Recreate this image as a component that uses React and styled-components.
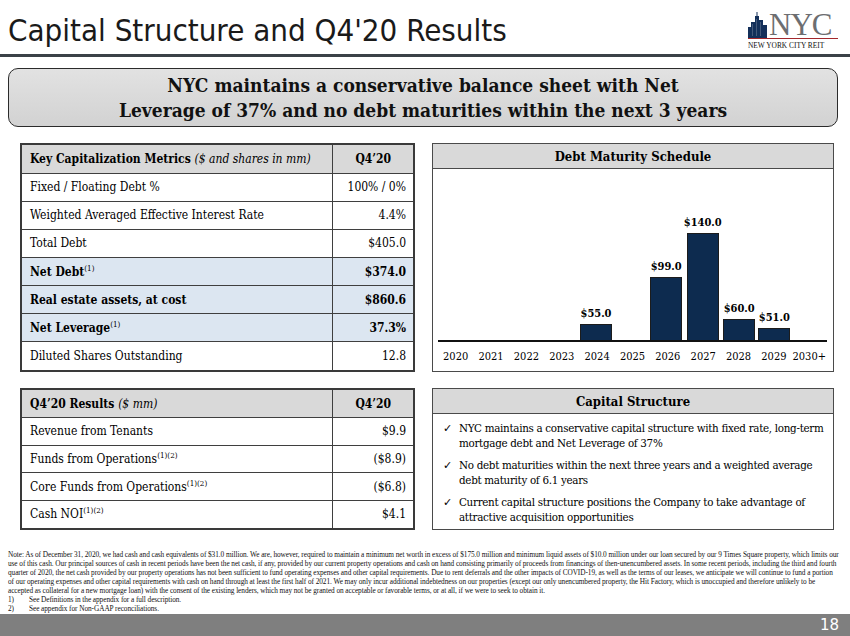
import React from 'react';
import styled, { createGlobalStyle } from 'styled-components';

const GlobalStyle = createGlobalStyle`
  html, body { margin: 0; padding: 0; background: #fff; }
  body { width: 850px; height: 636px; overflow: hidden; }
  * { box-sizing: border-box; }
`;

const serif = `"DejaVu Serif Condensed", "DejaVu Serif", serif`;

const Page = styled.div`
  width: 850px;
  height: 636px;
  display: flex;
  flex-direction: column;
  font-family: ${serif};
  color: #000;
`;

const Header = styled.header`
  height: 57px;
  flex: none;
  display: flex;
  justify-content: space-between;
  align-items: flex-start;
  border-bottom: 3px solid #3b4147;
  padding: 0 12px 0 8px;
`;

const Title = styled.h1`
  margin: 10px 0 0;
  font-family: "Liberation Sans Narrow", "DejaVu Sans Condensed", sans-serif;
  font-weight: 400;
  font-size: 31px;
  line-height: 40px;
  color: #1a1a1a;
`;

const Logo = styled.div`
  margin-top: 11px;
  display: flex;
  flex-direction: column;
  align-items: stretch;
  width: 90px;
`;

const LogoTop = styled.div`
  display: flex;
  align-items: flex-end;
  height: 28px;
  border-bottom: 1px solid #a3282c;
`;

const LogoWord = styled.span`
  font-family: "Liberation Serif", serif;
  font-size: 31px;
  line-height: 31px;
  margin-bottom: -2px;
  color: #6d6e71;
  letter-spacing: -1px;
  margin-left: 2px;
`;

const LogoSub = styled.span`
  margin-top: 3px;
  font-family: "Liberation Serif", serif;
  font-size: 7.4px;
  line-height: 8px;
  white-space: nowrap;
  color: #111;
`;

const Callout = styled.div`
  flex: none;
  margin: 11px 12px 0 8px;
  height: 59px;
  border: 1px solid #2b2b2b;
  border-radius: 10px;
  background: linear-gradient(#e2e2e2, #d2d2d2);
  display: flex;
  flex-direction: column;
  align-items: center;
  justify-content: center;
  font-weight: 700;
  font-size: 19px;
  line-height: 25px;
  color: #111;
`;

const Grid = styled.main`
  flex: none;
  margin-top: 16px;
  padding: 0 16px 0 20px;
  display: grid;
  grid-template-columns: 395px 402px;
  grid-template-rows: 229px 142px;
  column-gap: 17px;
  row-gap: 16px;
`;

const Table = styled.table`
  width: 100%;
  height: 100%;
  border-collapse: collapse;
  border: 2px solid #3a3a3a;
  font-size: 12px;
  table-layout: fixed;
`;

const Row = styled.tr`
  background: ${p => (p.$head ? '#d9d9d9' : p.$hl ? '#dce6f1' : '#fff')};
  font-weight: ${p => (p.$head || p.$hl ? 700 : 400)};
`;

const Cell = styled.td`
  border: 1.5px solid #3f3f3f;
  padding: 0 7px 0 8px;
  white-space: nowrap;
  text-align: ${p => (p.$num ? 'right' : 'left')};
  ${p => p.$center && 'text-align: center;'}
  width: ${p => (p.$num ? '82px' : 'auto')};
`;

const Ital = styled.i`
  font-weight: 400;
`;

const Sup = styled.sup`
  font-size: 8px;
  line-height: 0;
  vertical-align: 5px;
  font-weight: 400;
`;

const Panel = styled.section`
  border: 1.5px solid #4a4a4a;
  display: flex;
  flex-direction: column;
`;

const PanelHead = styled.div`
  height: 25px;
  flex: none;
  background: #d9d9d9;
  border-bottom: 1.5px solid #4a4a4a;
  display: flex;
  align-items: center;
  justify-content: center;
  font-weight: 700;
  font-size: 13px;
`;

const ChartBody = styled.div`
  flex: 1;
  display: flex;
  flex-direction: column;
  padding: 0 6px 0 5px;
`;

const Plot = styled.div`
  height: 173px;
  display: flex;
  align-items: flex-end;
  border-bottom: 2px solid #111;
`;

const Col = styled.div`
  flex: 1;
  display: flex;
  flex-direction: column;
  align-items: center;
  justify-content: flex-end;
`;

const BarLabel = styled.span`
  font-weight: 700;
  font-size: 11px;
  line-height: 12px;
  margin-bottom: 4px;
`;

const Bar = styled.div`
  width: 32px;
  background: #0d2b4f;
  border: 1px solid #1c1c1c;
  border-bottom: none;
`;

const Years = styled.div`
  display: flex;
  margin-top: 8px;
`;

const Year = styled.span`
  flex: 1;
  text-align: center;
  font-size: 11px;
`;

const List = styled.ul`
  list-style: none;
  margin: 0;
  padding: 7px 6px 0 10px;
  display: flex;
  flex-direction: column;
  gap: 7px;
`;

const Item = styled.li`
  display: flex;
  gap: 7px;
  font-size: 11.5px;
  letter-spacing: -0.3px;
  line-height: 15px;
`;

const Check = styled.span`
  flex: none;
  width: 9px;
  font-family: "DejaVu Sans", sans-serif;
  font-size: 11px;
`;

const Note = styled.div`
  flex: none;
  margin-top: 20px;
  padding: 0 10px 0 8px;
  font-family: "Liberation Serif", serif;
  font-size: 7.3px;
  letter-spacing: -0.06px;
  line-height: 9px;
  color: #111;
`;

const Foot = styled.div`
  display: flex;
  gap: 15px;
`;

const Footer = styled.footer`
  margin-top: auto;
  flex: none;
  height: 22px;
  background: #7f7f7f;
  color: #fff;
  display: flex;
  align-items: center;
  justify-content: flex-end;
  padding-right: 11px;
  font-family: "DejaVu Sans", sans-serif;
  font-size: 15px;
`;

const metrics = [
  { label: 'Fixed / Floating Debt %', value: '100% / 0%' },
  { label: 'Weighted Averaged Effective Interest Rate', value: '4.4%' },
  { label: 'Total Debt', value: '$405.0' },
  { label: 'Net Debt', sup: '(1)', value: '$374.0', hl: true },
  { label: 'Real estate assets, at cost', value: '$860.6', hl: true },
  { label: 'Net Leverage', sup: '(1)', value: '37.3%', hl: true },
  { label: 'Diluted Shares Outstanding', value: '12.8' },
];

const results = [
  { label: 'Revenue from Tenants', value: '$9.9' },
  { label: 'Funds from Operations', sup: '(1)(2)', value: '($8.9)' },
  { label: 'Core Funds from Operations', sup: '(1)(2)', value: '($6.8)' },
  { label: 'Cash NOI', sup: '(1)(2)', value: '$4.1' },
];

const debt = [
  ['2020', 0], ['2021', 0], ['2022', 0], ['2023', 0], ['2024', 55], ['2025', 0],
  ['2026', 99], ['2027', 140], ['2028', 60], ['2029', 51], ['2030+', 0],
];

const barHeight = v => 1.075 * (v - 40);

function DataTable({ title, unit, rows }) {
  return (
    <Table>
      <tbody>
        <Row $head>
          <Cell>
            {title} <Ital>{unit}</Ital>
          </Cell>
          <Cell $num $center>Q4’20</Cell>
        </Row>
        {rows.map(r => (
          <Row key={r.label} $hl={r.hl}>
            <Cell>
              {r.label}
              {r.sup && <Sup>{r.sup}</Sup>}
            </Cell>
            <Cell $num>{r.value}</Cell>
          </Row>
        ))}
      </tbody>
    </Table>
  );
}

function Skyline() {
  return (
    <svg width="19" height="26" viewBox="0 0 19 26">
      <g fill="#14305a">
        <rect x="0" y="15" width="3" height="11" />
        <rect x="3" y="10" width="4" height="16" />
        <rect x="7" y="4" width="4" height="22" />
        <rect x="8.5" y="0" width="1" height="4" />
        <rect x="11" y="8" width="4" height="18" />
        <rect x="15" y="13" width="4" height="13" />
      </g>
      <g fill="#ffffff" opacity="0.35">
        <rect x="8" y="7" width="0.6" height="17" />
        <rect x="12" y="10" width="0.6" height="14" />
        <rect x="4" y="12" width="0.6" height="12" />
      </g>
    </svg>
  );
}

export default function App() {
  return (
    <>
      <GlobalStyle />
      <Page>
        <Header>
          <Title>Capital Structure and Q4'20 Results</Title>
          <Logo>
            <LogoTop>
              <Skyline />
              <LogoWord>NYC</LogoWord>
            </LogoTop>
            <LogoSub>NEW YORK CITY REIT</LogoSub>
          </Logo>
        </Header>

        <Callout>
          <span>NYC maintains a conservative balance sheet with Net</span>
          <span>Leverage of 37% and no debt maturities within the next 3 years</span>
        </Callout>

        <Grid>
          <DataTable title="Key Capitalization Metrics" unit="($ and shares in mm)" rows={metrics} />

          <Panel>
            <PanelHead>Debt Maturity Schedule</PanelHead>
            <ChartBody>
              <Plot>
                {debt.map(([y, v]) => (
                  <Col key={y}>
                    {v > 0 && <BarLabel>${v.toFixed(1)}</BarLabel>}
                    {v > 0 && <Bar style={{ height: `${barHeight(v)}px` }} />}
                  </Col>
                ))}
              </Plot>
              <Years>
                {debt.map(([y]) => (
                  <Year key={y}>{y}</Year>
                ))}
              </Years>
            </ChartBody>
          </Panel>

          <DataTable title="Q4’20 Results" unit="($ mm)" rows={results} />

          <Panel>
            <PanelHead>Capital Structure</PanelHead>
            <List>
              <Item>
                <Check>✓</Check>
                <span>NYC maintains a conservative capital structure with fixed rate, long-term mortgage debt and Net Leverage of 37%</span>
              </Item>
              <Item>
                <Check>✓</Check>
                <span>No debt maturities within the next three years and a weighted average debt maturity of 6.1 years</span>
              </Item>
              <Item>
                <Check>✓</Check>
                <span>Current capital structure positions the Company to take advantage of attractive acquisition opportunities</span>
              </Item>
            </List>
          </Panel>
        </Grid>

        <Note>
          <div>
            Note: As of December 31, 2020, we had cash and cash equivalents of $31.0 million. We are, however, required to maintain a minimum net worth in excess of $175.0 million and minimum liquid assets of $10.0 million under our loan secured by our 9 Times Square property, which limits our use of this cash. Our principal sources of cash in recent periods have been the net cash, if any, provided by our current property operations and cash on hand consisting primarily of proceeds from financings of then-unencumbered assets. In some recent periods, including the third and fourth quarter of 2020, the net cash provided by our property operations has not been sufficient to fund operating expenses and other capital requirements. Due to rent deferrals and the other impacts of COVID-19, as well as the terms of our leases, we anticipate we will continue to fund a portion of our operating expenses and other capital requirements with cash on hand through at least the first half of 2021. We may only incur additional indebtedness on our properties (except our only unencumbered property, the Hit Factory, which is unoccupied and therefore unlikely to be accepted as collateral for a new mortgage loan) with the consent of the existing lenders, which may not be granted on acceptable or favorable terms, or at all, if we were to seek to obtain it.
          </div>
          <Foot><span>1)</span><span>See Definitions in the appendix for a full description.</span></Foot>
          <Foot><span>2)</span><span>See appendix for Non-GAAP reconciliations.</span></Foot>
        </Note>

        <Footer>18</Footer>
      </Page>
    </>
  );
}
